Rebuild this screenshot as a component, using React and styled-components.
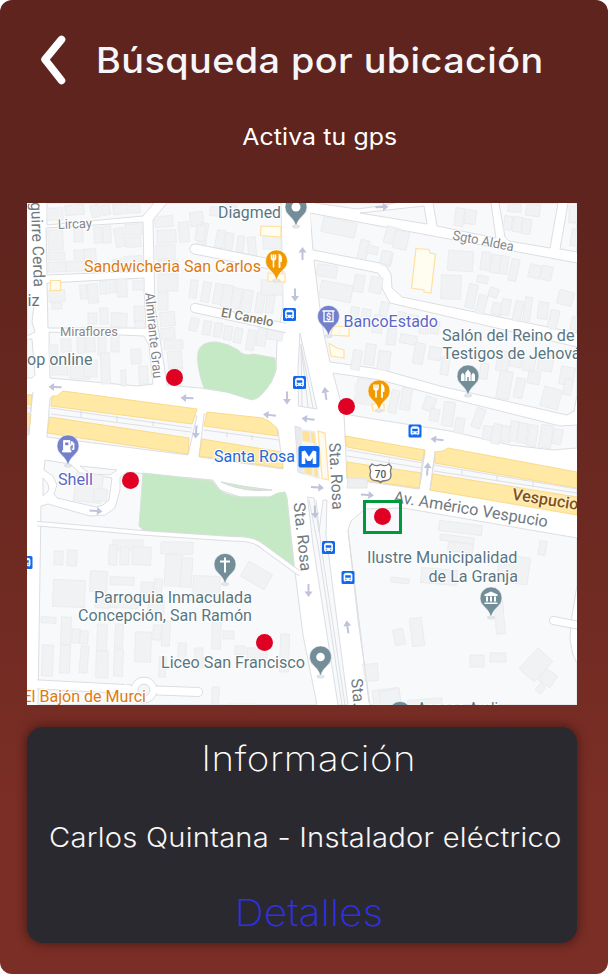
import React from 'react';
import styled, { createGlobalStyle } from 'styled-components';

const GlobalStyle = createGlobalStyle`
  *, *::before, *::after { box-sizing: border-box; }
  html, body { margin: 0; padding: 0; background: #fff; }
  body { font-family: Inter, "Open Sans", sans-serif; }
`;

const Screen = styled.main`
  display: flex;
  flex-direction: column;
  width: 608px;
  height: 974px;
  padding: 0 31px 31px 27px;
  overflow: hidden;
  border-radius: 12px;
  background: linear-gradient(180deg, #5e241d 0%, #5e241d 22%, #7a2e25 82%, #7a2e25 100%);
`;

const Header = styled.header`
  display: flex;
  align-items: center;
  height: 120px;
  padding-left: 12px;
`;

const BackButton = styled.button`
  display: flex;
  width: 30px;
  height: 52px;
  padding: 0;
  border: 0;
  background: none;
`;

const Title = styled.h1`
  margin: 0 0 0 27px;
  color: #f6f6fa;
  font-size: 35px;
  font-weight: 500;
  line-height: 42px;
  letter-spacing: 0.4px;
  white-space: nowrap;
  transform: scaleX(1.08);
  transform-origin: left;
`;

const Hint = styled.p`
  height: 83px;
  margin: 0;
  padding: 2px 0 0 35px;
  color: #fff;
  font-size: 23px;
  font-weight: 400;
  line-height: 30px;
  letter-spacing: 0.1px;
  text-align: center;
  white-space: nowrap;

  span {
    display: inline-block;
    transform: scaleX(1.08);
  }
`;

const MapFrame = styled.section`
  position: relative;
  width: 550px;
  height: 502px;
  overflow: hidden;
`;

const MapCanvas = styled.svg`
  display: block;
  width: 550px;
  height: 502px;
  font-family: Roboto, sans-serif;
`;

const Worker = styled.button`
  position: absolute;
  left: ${(p) => p.$x - 27 - 8.5}px;
  top: ${(p) => p.$y - 203 - 8.5}px;
  width: 17px;
  height: 17px;
  padding: 0;
  border: 0;
  border-radius: 50%;
  background: #e00024;
`;

const Selection = styled.div`
  position: absolute;
  left: 336px;
  top: 297px;
  width: 39px;
  height: 34px;
  border: 3px solid #009a3e;
`;

const InfoCard = styled.section`
  display: flex;
  flex-direction: column;
  align-items: center;
  width: 550px;
  height: 216px;
  margin-top: 22px;
  border-radius: 16px;
  background: #2a292f;
  box-shadow: 0 0 9px 2px rgba(40, 15, 15, 0.5);
  white-space: nowrap;
`;

const InfoTitle = styled.h2`
  margin: 8px 0 0 13px;
  color: #fff;
  font-size: 35px;
  font-weight: 250;
  line-height: 46px;
  letter-spacing: 0.5px;
  transform: scaleX(1.1);
`;

const InfoText = styled.p`
  margin: 39px 0 0 6px;
  color: #f7f7f7;
  font-size: 27px;
  font-weight: 270;
  line-height: 36px;
  letter-spacing: 0.2px;
  transform: scaleX(1.08);
`;

const DetailsLink = styled.a`
  margin: 33px 0 0 14px;
  color: #3030ea;
  font-size: 37px;
  font-weight: 200;
  line-height: 48px;
  letter-spacing: 0.2px;
  text-decoration: none;
  transform: scaleX(1.09);
`;

const blocks = [
  '27,305 34,305 32,322 35,332 27,336', '27,339 32,339 35,375 32,378 27,378',
  '47,203 47,225 143,216 154,203', '46,228 143,222 144,271 47,275',
  '47,283 144,278 144,290 146,328 48,328', '49,332 144,336 149,345 153,384 137,386 94,382 50,378',
  '153,220 167,203 281,203 283,306 277,342 276,370 271,383 253,400 227,392 200,388 167,385 162,352 155,308',
  '315,203 357,209 380,206 395,203', '360,213 424,206 427,224',
  '433,203 437,226 496,238 491,203', '499,203 505,237 509,241 550,248 558,203', '568,203 560,249 577,252 577,203',
  '310,213 577,263 577,333 402,297 392,288 391,274 386,266 380,263 313,250',
  '314,260 378,273 382,279 382,288 390,303 577,347 577,395 574,411 567,415 440,386 380,369 330,362 322,325 318,293',
  '333,373 380,380 440,396 560,426 577,425 577,448 553,450 510,445 450,431 380,420 344,414',
  '45,460 70,464 80,473 112,478 109,500 103,505 96,507 57,498 54,494 57,485 53,476 44,470',
  '80,466 117,470 110,475 90,474', '43,478 48,484 49,490 43,496',
  '41,506 48,504 90,516 105,515 115,508 120,490 120,477 127,472 213,480 220,490 240,497 270,497 285,492 287,498 295,572 303,635 317,705 38,705',
  '348,530 351,521 365,509 403,508 577,538 577,585 571,622 570,640 573,655 577,663 577,705 370,705 358,620',
];

const greens = [
  'M198 352Q201 341 217 342Q229 344 238 350Q244 357 253 354L275 358L276 370Q272 384 262 394Q256 401 249 399L227 392L204 388Q196 366 198 352Z',
  'M143 473L212 481L219 489Q224 495 240 497H270Q277 492 285 492L287 499L294 568L261 544Q250 537 235 537L145 532L139 526Z',
];

// x, y, width, height, rotation in degrees
const buildings = [
  [47,208,16,12,-3],[65,205,19,10,-5],[91,205,9,12,-12],[102,205,8,10,-12],[113,204,15,10,-5],[130,205,10,8,-3],
  [48,230,15,20,-2],[48,252,17,8,0],[48,262,18,10,-2],[74,228,9,14,-2],[94,227,8,16,-2],[103,226,8,17,-2],[115,228,9,19,-9],[125,224,17,11,-2],[126,237,15,10,-3],[74,250,12,9,0],[84,249,12,13,-4],[66,261,25,10,-2],[113,259,9,12,-3],[124,256,18,16,-3],
  [49,290,16,12,-3],[52,303,10,6,0],[80,285,7,14,-3],[88,284,10,19,-4],[100,281,7,13,-4],[109,280,7,13,-2],[117,279,10,18,-2],[133,281,11,9,0],[100,308,8,16,-2],[88,313,9,11,0],[111,313,16,14,3],[134,306,9,16,0],[135,321,10,7,0],
  [49,345,9,19,-2],[61,339,10,13,-2],[77,337,8,16,-2],[86,335,9,17,-2],[98,335,8,20,0],[111,335,8,17,0],[52,363,16,12,0],[70,366,20,13,2],[84,360,13,17,0],[101,353,9,31,-2],[121,370,5,16,-2],[131,349,10,15,-3],[139,366,9,18,-3],
  [155,216,18,11,-5],[157,230,19,13,-2],[156,245,19,14,-2],[158,260,20,12,-2],[158,274,20,17,0],[158,292,10,18,0],[160,312,15,14,-4],[161,328,14,11,-4],[164,340,19,9,-2],[168,351,14,18,-5],[170,368,12,8,-2],
  [179,222,10,20,-4],[190,212,13,14,-6],[199,223,8,24,9],[210,207,11,9,5],[225,205,11,12,8],[196,225,9,16,8],[216,230,8,18,10],[225,233,8,18,8],[237,236,7,16,6],[248,237,8,21,-4],[263,236,18,13,0],
  [190,280,7,18,7],[202,282,8,20,10],[214,284,9,20,10],[222,285,10,22,9],[232,288,9,21,10],[242,290,10,22,9],[256,293,8,20,8],[266,295,8,18,8],[261,280,22,15,1],[190,318,8,13,15],[203,321,8,14,10],[214,323,8,14,10],[224,326,8,14,10],[234,328,8,15,10],[247,330,8,20,9],[257,329,9,17,9],[267,328,16,12,9],
  [322,220,34,15,12],[359,240,9,19,13],[367,246,11,8,12],[382,252,10,14,13],[317,265,20,12,8],[320,283,32,17,11],[354,275,10,17,9],[370,277,12,16,10],[380,302,8,16,12],[350,307,8,19,10],[361,309,9,17,10],[373,315,10,18,10],
  [385,227,14,17,14],[394,231,14,18,12],[381,251,10,13,12],[448,251,25,20,4],[441,275,20,24,2],[481,252,9,18,8],[491,255,10,18,8],[500,256,8,18,8],[510,259,8,22,12],[529,265,12,13,15],[541,266,11,14,13],[477,276,11,7,10],[467,284,9,24,13],[489,288,9,9,20],[477,295,9,19,15],[492,303,11,12,12],[501,299,9,16,12],[514,301,8,20,13],[524,297,7,25,8],[538,302,10,17,8],[549,310,9,19,13],[558,291,15,14,15],[571,317,8,13,12],[455,208,9,18,7],[465,210,11,14,8],[508,204,13,8,4],[526,204,14,12,8],[504,216,8,14,8],[513,217,9,15,8],[522,219,9,15,8],[569,206,9,17,2],[571,229,8,17,8],
  [352,350,9,20,10],[365,344,10,21,8],[378,351,12,19,8],[387,328,9,17,7],[397,312,8,15,10],[408,315,10,12,8],[420,319,9,15,10],[431,321,8,13,10],[400,335,17,9,10],[414,343,10,21,10],[429,347,12,13,8],[441,357,8,18,8],[480,363,8,16,8],[497,351,12,20,10],[510,353,12,14,10],[523,358,12,13,10],[538,355,15,16,10],[560,367,14,18,10],[498,371,13,28,10],[515,378,9,20,12],[528,371,12,13,10],[542,388,18,20,15],[564,379,8,16,10],
  [356,379,15,25,10],[390,390,8,23,12],[401,388,10,22,9],[424,397,11,14,20],[430,409,9,12,13],[443,402,11,24,8],[455,418,9,15,10],[474,408,9,20,20],[483,426,10,14,8],[492,424,9,20,12],[501,426,10,16,8],[510,421,8,20,8],[518,423,9,20,8],[528,425,9,21,8],[540,425,12,23,9],[553,429,9,15,12],
  [75,474,27,28,7],[94,489,13,12,3],[113,540,30,10,0],[161,542,32,12,1],[54,551,9,14,2],[67,550,10,16,2],[109,545,8,20,3],[120,547,9,18,2],[132,547,19,18,2],[90,571,17,21,3],[110,577,24,8,2],[53,580,32,27,2],[165,555,17,31,3],[181,558,11,29,3],[193,576,27,25,2],[141,582,12,15,2],[154,579,8,18,4],[95,597,15,11,2],[110,596,28,12,3],[148,600,16,14,2],[41,617,15,6,3],[61,617,10,28,2],[72,629,8,14,4],[80,631,8,13,4],[97,624,10,27,2],[115,624,8,24,3],[135,632,16,30,2],[153,625,8,15,3],[162,621,8,25,3],[42,645,11,31,2],[60,645,10,28,3],[80,646,8,27,5],[96,651,12,27,1],[114,649,9,27,2],[159,657,7,20,3],[178,643,8,20,2],[195,648,8,20,-2],[212,616,9,33,2],[223,631,11,8,2],[235,646,10,9,2],[247,648,20,10,1],[280,634,9,38,2],[243,567,27,17,30],[212,687,7,17,3],[229,704,26,7,0],
  [439,523,43,10,7],[440,536,34,6,7],[448,543,25,9,7],[539,541,7,14,8],[421,569,36,15,5],[391,578,18,5,7],[498,556,31,27,8],[495,600,9,34,-5],[411,618,12,28,-7],[394,629,10,16,-12],[470,655,14,12,1],[490,653,16,9,1],[526,651,20,28,42],[541,671,14,14,35],[537,684,7,9,40],[362,664,16,17,-4],[373,689,27,16,-7],[380,690,20,15,-9],[408,699,34,8,-4],
];

const yellows = [
  '27,395 32,395 31,405 27,404', '27,413 31,414 29,431 27,430',
  '52,396 57,396 63,391 197,409 192,424 51,406', '50,417 189,438 188,454 47,433',
  '207,412 263,418 270,422 277,428 278,436 204,426', '202,439 282,452 283,468 199,456',
  '345,436 425,450 423,461 347,447', '347,462 380,467 422,473 419,488 347,478',
  '435,452 443,451 448,448 577,472 577,488 435,463', '433,474 577,497 577,515 430,490',
];

// x, y, rotation of an arrow that points right at 0
const arrows = [
  [302.5,253.5,-90],[295,295,90],[382,207,-3],[55,387,183],[187,398,183],[196,432,95],[96,511,5],[287,398,90],[325.5,393.5,-98],
  [269.5,415,187],[308,419,187],[317.5,487.5,5],[367.5,495,5],[315,512,88],[437,439.5,187],[427.5,469,-85],[308.5,590.5,90],[347.5,627,-98],
];

const stops = [[289.5,314.5],[299.5,382.5],[415,431],[328.5,547.5],[348,577.5],[26,562.5]];

const SLATE = '#5a7681';
const labels = [
  { t: 'Diagmed', x: 218, y: 218, w: 63 },
  { t: 'Sandwicheria San Carlos', x: 84, y: 271.5, w: 177, c: '#dc7a10' },
  { t: 'BancoEstado', x: 343.5, y: 327, w: 94.5, c: '#5c66c6' },
  { t: 'Salón del Reino de', x: 442, y: 341, w: 132.5 },
  { t: 'Testigos de Jehová', x: 442.5, y: 359, w: 138 },
  { t: 'op online', x: 27, y: 364.5, w: 65.5 },
  { t: 'iz', x: 27.5, y: 306, w: 12 },
  { t: 'Lircay', x: 58, y: 229, w: 34, r: -2, s: 13.5, c: '#83868a' },
  { t: 'Miraflores', x: 60, y: 336, w: 58, s: 13.5, c: '#83868a' },
  { t: 'Almirante Grau', x: 145, y: 293, w: 86, r: 84.5, s: 13.8, c: '#83868a' },
  { t: 'Aguirre Cerda', x: 30.5, y: 192, w: 95, r: 88, s: 16, c: '#707a80' },
  { t: 'El Canelo', x: 220.5, y: 316.5, w: 53, r: 11, s: 13, c: '#7d796e', b: 500 },
  { t: 'Sgto Aldea', x: 452, y: 239.5, w: 62, r: 11, s: 13.5, c: '#83868a' },
  { t: 'Santa Rosa', x: 214, y: 462, w: 81, c: '#2468d8' },
  { t: 'Sta. Rosa', x: 329, y: 443, w: 67, r: 87, c: '#707a80' },
  { t: 'Sta. Rosa', x: 293.5, y: 503, w: 69, r: 84, c: '#707a80' },
  { t: 'Sta. Rosa', x: 351, y: 679, w: 68, r: 84, c: '#707a80' },
  { t: 'Av. Américo Vespucio', x: 393, y: 502, w: 156, r: 9.3, c: '#707a80' },
  { t: 'Vespucio', x: 511.5, y: 499.5, w: 67, r: 9, c: '#81501f', b: 500, h: '#fff3c8' },
  { t: 'Shell', x: 58, y: 484.5, w: 35, c: '#5c66c6' },
  { t: 'Parroquia Inmaculada', x: 94, y: 602.5, w: 158 },
  { t: 'Concepción, San Ramón', x: 78, y: 621, w: 174 },
  { t: 'Liceo San Francisco', x: 161, y: 668, w: 144 },
  { t: 'El Bajón de Murci', x: 22.5, y: 701.5, w: 123.5, c: '#dc7a10' },
  { t: 'Ilustre Municipalidad', x: 367, y: 563, w: 150.5 },
  { t: 'de La Granja', x: 428.5, y: 581.5, w: 89.5 },
  { t: 'Acceso Audi', x: 417, y: 714, w: 81 },
];

const Label = ({ t, x, y, w, r = 0, s = 16.2, c = SLATE, b = 400, h = '#fff' }) => (
  <text
    x={x} y={y} textLength={w} lengthAdjust="spacingAndGlyphs" fontSize={s} fontWeight={b} fill={c}
    stroke={h} strokeWidth="2" strokeLinejoin="round" paintOrder="stroke"
    transform={r ? `rotate(${r} ${x} ${y})` : undefined}
  >{t}</text>
);

const Pin = ({ x, y, color = '#738e99', children }) => (
  <g transform={`translate(${x} ${y})`}>
    <ellipse cx="0" cy="19.5" rx="4" ry="2" fill="#e0e2e5" />
    <path d="M0 20C-1.2 14-4 11.5-7.2 8.2A11 11 0 1 1 7.2 8.2C4 11.5 1.2 14 0 20Z" fill={color} stroke="#fff" strokeWidth=".6" />
    {children}
  </g>
);

const Cutlery = () => (
  <g stroke="#fff" fill="none" strokeLinecap="round">
    <path d="M-5-6V-3Q-5-1.2-3-1.2T-1-3V-6M-3-6V6" strokeWidth="1.6" />
    <path d="M3 6V-6Q5-5 4.500 0H3" strokeWidth="1.9" />
  </g>
);

const Road = ({ d, w }) => (
  <g fill="none" strokeLinecap="round" strokeLinejoin="round">
    <path d={d} stroke="#dcdee2" strokeWidth={w + 2} />
    <path d={d} stroke="#fff" strokeWidth={w} />
  </g>
);

const StreetMap = () => (
  <MapCanvas viewBox="27 203 550 502" role="img" aria-label="Mapa">
    <rect x="27" y="203" width="550" height="502" fill="#fff" />
    <g fill="#f8f9fb" stroke="#dcdee2" strokeLinejoin="round">
      {blocks.map((p) => <polygon key={p} points={p} />)}
    </g>
    <g fill="#f1f2f4" stroke="#e8eaed" strokeWidth=".8">
      {buildings.map(([x, y, w, h, r], i) => (
        <rect key={i} x={x} y={y} width={w} height={h} transform={`rotate(${r} ${x + w / 2} ${y + h / 2})`} />
      ))}
    </g>
    <g fill="#c5e8c5" stroke="#d5e3d5">{greens.map((d) => <path key={d} d={d} />)}</g>
    <path d="M221 482Q244 487 272 490Q244 493 221 482Z" fill="#d3e6d6" stroke="#d5dcd8" />

    <Road d="M195 249L290 268" w={9} />
    <Road d="M195 308L290 329" w={8} />
    <Road d="M30 523L145 533L235 539Q252 538 262 546L299 573" w={3.5} />
    <Road d="M30 684L144 690L198 692" w={8} />
    <path d="M27 505H37V704H27Z" fill="#fff" />
    <circle cx="144" cy="690" r="13" fill="#fff" stroke="#dcdee2" />
    <path d="M132 687L125 684V689L133 692ZM155 687L164 688V694L155 693Z" fill="#fff" />
    <circle cx="144" cy="690" r="6" fill="#f4f5f7" stroke="#dcdee2" />
    <Road d="M553.500 620.500L577 625" w={7} />
    <path d="M284 203L286 330L284 365L287 375L303 403L299 573L318 703L368 703L348 577L341 525L340 430L327 362L313 300L310 203Z" fill="#fff" />

    <g fill="#f8f9fb" stroke="#dcdee2">
      <polygon points="50,398 197,416 188,455 47,437" />
      <polygon points="204,414 278,430 283,469 199,457" />
      <polygon points="345,436 425,452 419,489 347,479" />
      <polygon points="435,455 577,477 577,513 430,490" />
      <polygon points="27,395 32,395 29,435 27,435" />
      <path d="M300 333L317 409L298.500 406L298 368ZM301 344L302 406M301 345L308 407M301 345L313 408" />
      <path d="M307.500 497L314 498L319 532L323 500L327 500L326 535L348 705H338L313 545ZM309 500L318 545L342 705M316 500L321 545L345 705" />
    </g>
    <g fill="#ffe9a5" stroke="#fbd782" strokeWidth=".9">{yellows.map((p) => <polygon key={p} points={p} />)}</g>
    <g fill="none" stroke="#d5d8dd" strokeWidth=".8">
      <path d="M51 408L192 428M51 414L191 432M27 408L31 408M204 430L279 440M347 450L423 463M347 456L422 468M434 465L577 489M434 471L577 493" />
      <path d="M81 410V418M117 416V422M153 421V426M227 432V437M252 435V440M389 459V463M462 470V475M497 476V481M533 482V487" />
    </g>
    <g fill="none" stroke="#dcdee2">
      <path d="M344 414L345 436M33 392L28 435M424 449L419 489M435 451L430 490M348 530L369 703" />
    </g>
    <g>
      <path d="M295 426L301 428L304 474L298 472Z" fill="#e9eaed" stroke="#dfe1e4" />
      <path d="M301.500 430L310 431L313 476L304 474ZM310 431L315 432L319 478L314 477Z" fill="#ffe29a" stroke="#eceef0" strokeWidth="1.500" />
      <path d="M302 441L314 443L316 468L303 466Z" fill="#f5f5f6" />
      <path d="M318 431L325 433L328.500 480L322 478.500Z" fill="#fffaf0" stroke="#ffe2a0" strokeWidth="1.300" />
      <path d="M348 478L367 479V488H347Z" fill="#eeeff1" stroke="#e3e5e8" />
      <path d="M355 383Q352 402 366 405L378 408L382 380Z" fill="#f1f2f4" />
    </g>
    <g fill="#fffcf0" stroke="#ffe0a0" strokeWidth="1.200">
      <rect x="50.500" y="280.500" width="10" height="10" />
      <path d="M261 226L281 226.500V237L260.500 235.500Z" />
      <path d="M416 248.500L429 249.500L430 253L435.500 254L431 293L424 292V290L411.500 288Z" />
      <path d="M329 343.500L337 348L344 350V358L331 356ZM333 326L349 327V336L331 335Z" />
      <path d="M268 273L285 274V282L268 281ZM372 404H384V411H373Z" />
    </g>

    {arrows.map(([x, y, r]) => (
      <path key={`${x}-${y}`} transform={`translate(${x} ${y}) rotate(${r})`} d="M-6.500-1H1V-4L6.500 0L1 4V1H-6.500Z" fill="#bfc3dc" />
    ))}

    {labels.map((l) => <Label key={`${l.t}-${l.y}`} {...l} />)}

    {stops.map(([x, y]) => (
      <g key={`${x}-${y}`} transform={`translate(${x} ${y})`}>
        <rect x="-6.500" y="-6.500" width="13" height="13" rx="1.500" fill="#1269ee" />
        <path d="M-4-2.500Q-4-4.200-2-4.200H2Q4-4.200 4-2.500V3H-4ZM-3 2.500V4.300M3 2.500V4.300" fill="#fff" stroke="#fff" strokeWidth=".8" />
        <path d="M-2.800-2.300H2.800V.2H-2.800ZM-2.800 1.300H-1.500V2.200H-2.800ZM1.500 1.300H2.800V2.200H1.500Z" fill="#1269ee" />
      </g>
    ))}

    <g>
      <rect x="298.500" y="446" width="21" height="21.500" rx="2" fill="#1269ee" />
      <path d="M303.500 464V451.500L309 460L314.500 451.500V464" fill="none" stroke="#fff" strokeWidth="3.600" strokeLinejoin="bevel" />
    </g>
    <g>
      <path d="M372 464Q376 467 380.500 464.500Q385 467 389 464L391.500 467Q389.500 471 391 475Q391 480 386 480.500Q382 480.500 380.500 482.500Q379 480.500 375 480.500Q370 480 370 475Q371.500 471 369.500 467Z" fill="#fff" stroke="#777" strokeWidth="1.300" />
      <text x="380.500" y="478" textAnchor="middle" fontSize="10" fontWeight="500" fill="#555">70</text>
    </g>

    <Pin x={296} y={207}><circle r="4.500" fill="#fff" /></Pin>
    <Pin x={276.5} y={261} color="#f29900"><Cutlery /></Pin>
    <Pin x={379} y={391} color="#f29900"><Cutlery /></Pin>
    <Pin x={328.5} y={316.500} color="#7580cb">
      <path d="M-6-5.500H6M-4.500-5V5H4.500V-5" fill="none" stroke="#fff" strokeWidth="1.300" />
      <text y="3.800" textAnchor="middle" fontSize="9" fontWeight="700" fill="#fff">$</text>
    </Pin>
    <Pin x={68} y={446} color="#7580cb">
      <path d="M-4.500-5.500H2V4.500H3V6H-5.500V4.500H-4.500ZM2 0H4V3.500H6V-2.500L3.500-5" fill="#fff" stroke="#fff" strokeWidth=".8" />
      <path d="M-2.800-3.500H.4V-.8H-2.800Z" fill="#7580cb" />
      <path d="M3.200-.8V2.500H4.800V-1Z" fill="#7580cb" />
    </Pin>
    <Pin x={468} y={376}>
      <path d="M-7 5V-1L-5.200-3.500L-3.400-1V5ZM-2.700 5V-3L0-6.500L2.700-3V5ZM3.400 5V-1L5.200-3.500L7-1V5Z" fill="#fff" />
      <path d="M-.7 5V1H.7V5Z" fill="#738e99" />
    </Pin>
    <Pin x={225} y={564.5}><path d="M0-7V8M-5-3H5" stroke="#fff" strokeWidth="2" /></Pin>
    <Pin x={320.5} y={657}><circle r="4.300" fill="#fff" /></Pin>
    <Pin x={491} y={598}>
      <path d="M-6.500-3.500L0-6.500L6.500-3.500V-2H-6.500ZM-5-1.500H-3V3.500H-5ZM-1-1.500H1V3.500H-1ZM3-1.500H5V3.500H3ZM-6.500 4.500H6.500V6H-6.500Z" fill="#fff" />
    </Pin>
    <Pin x={400} y={712.5} />
  </MapCanvas>
);

const workers = [[174.5, 377.5], [346.5, 406.5], [130.5, 480.5], [382.5, 516.5], [264.5, 642.5]];

export default function App() {
  return (
    <>
      <GlobalStyle />
      <Screen>
        <Header>
          <BackButton aria-label="Volver">
            <svg width="30" height="52" viewBox="39 34 30 52">
              <path d="M61.500 39.500L45 59.500L61.500 80.500" fill="none" stroke="#fff" strokeWidth="7.600" strokeLinecap="round" strokeLinejoin="round" />
            </svg>
          </BackButton>
          <Title>Búsqueda por ubicación</Title>
        </Header>
        <Hint><span>Activa tu gps</span></Hint>
        <MapFrame>
          <StreetMap />
          {workers.map(([x, y]) => <Worker key={x} $x={x} $y={y} aria-label="Trabajador" />)}
          <Selection />
        </MapFrame>
        <InfoCard>
          <InfoTitle>Información</InfoTitle>
          <InfoText>Carlos Quintana - Instalador eléctrico</InfoText>
          <DetailsLink>Detalles</DetailsLink>
        </InfoCard>
      </Screen>
    </>
  );
}
